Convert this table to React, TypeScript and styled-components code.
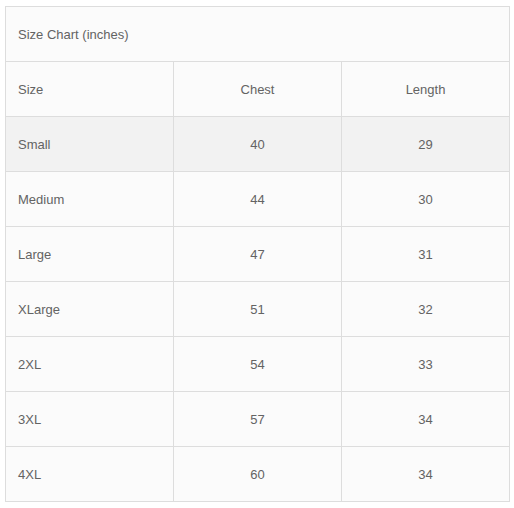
import React from "react";
import styled, { createGlobalStyle } from "styled-components";

const Global = createGlobalStyle`
  html, body { margin: 0; padding: 0; background: #ffffff; }
  body { font-family: "Liberation Sans", Arial, sans-serif; }
`;

const Wrap = styled.div`
  padding: 6px 0 0 5px;
`;

const Table = styled.table`
  border-collapse: collapse;
  width: 505px;
  table-layout: fixed;
  font-family: "Liberation Sans", Arial, sans-serif;
  font-size: 13px;
  color: #636363;
`;

const Row = styled.tr<{ $shade?: boolean }>`
  height: 55px;
  background: ${(p) => (p.$shade ? "#f2f2f2" : "#fbfbfb")};
`;

const Cell = styled.td<{ $align?: "left" | "center" }>`
  border: 1px solid #dddddd;
  padding: 0 12px;
  text-align: ${(p) => p.$align ?? "center"};
  vertical-align: middle;
  box-sizing: border-box;
`;

const rows: [string, number, number][] = [
  ["Small", 40, 29],
  ["Medium", 44, 30],
  ["Large", 47, 31],
  ["XLarge", 51, 32],
  ["2XL", 54, 33],
  ["3XL", 57, 34],
  ["4XL", 60, 34],
];

export default function App() {
  return (
    <>
      <Global />
      <Wrap>
        <Table>
          <colgroup>
            <col style={{ width: 168 }} />
            <col style={{ width: 168 }} />
            <col style={{ width: 168 }} />
          </colgroup>
          <tbody>
            <Row>
              <Cell colSpan={3} $align="left">Size Chart (inches)</Cell>
            </Row>
            <Row>
              <Cell $align="left">Size</Cell>
              <Cell>Chest</Cell>
              <Cell>Length</Cell>
            </Row>
            {rows.map(([s, c, l], i) => (
              <Row key={s} $shade={i === 0}>
                <Cell $align="left">{s}</Cell>
                <Cell>{c}</Cell>
                <Cell>{l}</Cell>
              </Row>
            ))}
          </tbody>
        </Table>
      </Wrap>
    </>
  );
}
